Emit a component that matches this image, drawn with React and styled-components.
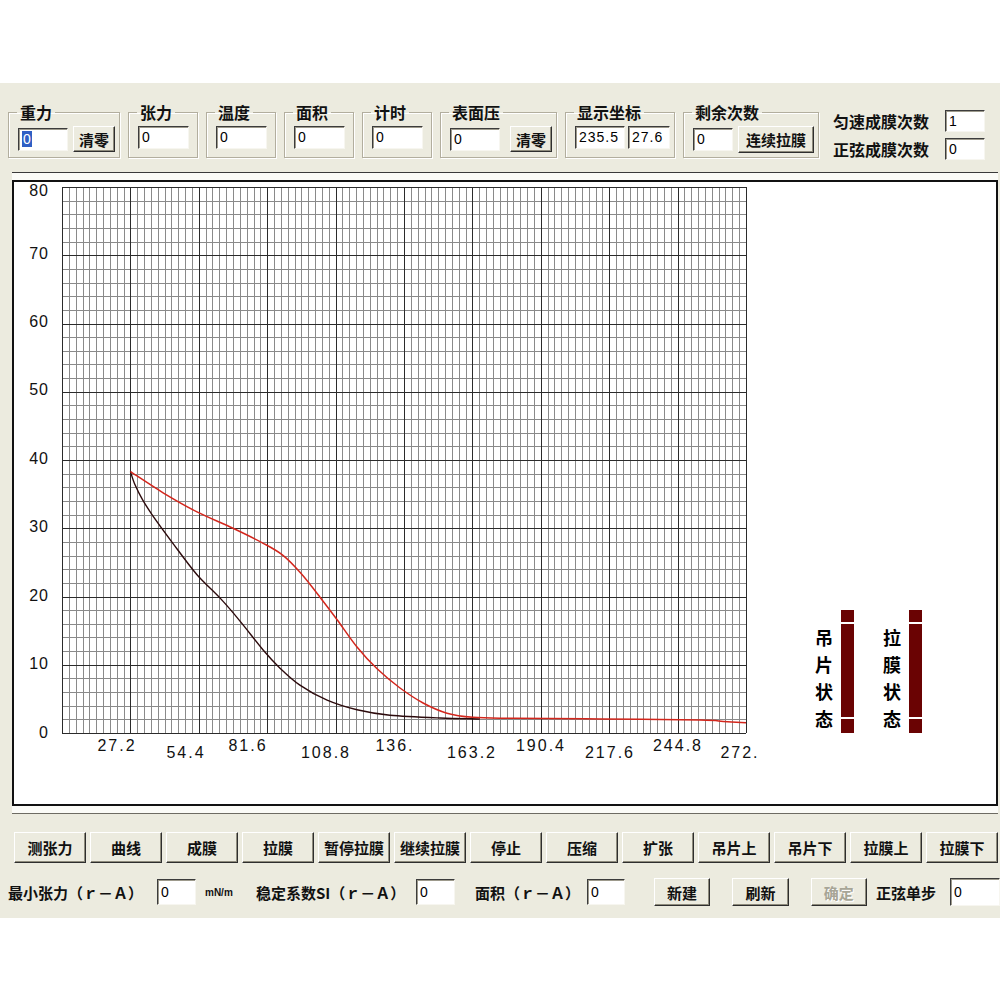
import React from "react";
import styled, { createGlobalStyle } from "styled-components";

const GlobalStyle = createGlobalStyle`
  body {
    margin: 0;
    background: #fff;
    font-family: "Noto Sans CJK SC", "Liberation Sans", sans-serif;
  }
`;

const Page = styled.div`
  width: 1000px;
  padding-top: 83px;
`;

const Window = styled.div`
  box-sizing: border-box;
  height: 835px;
  overflow: hidden;
  padding-top: 20px;
  background: #ecebdf;
  color: #111;
  font-family: "Noto Sans CJK SC", "Liberation Sans", sans-serif;
`;

/* ---------- top toolbar ---------- */
const Toolbar = styled.div`
  display: flex;
  align-items: flex-start;
  gap: 8px;
  height: 56px;
  padding-left: 8px;
`;

const Group = styled.fieldset`
  box-sizing: border-box;
  width: ${(p) => p.$w}px;
  height: 55px;
  margin: 0;
  padding: 5px 4px 4px 9px;
  border: 1px solid #b2ae9e;
  box-shadow: inset 1px 1px 0 #fff, 1px 1px 0 #fff;
`;

const Legend = styled.legend`
  margin-left: -1px;
  padding: 0 3px;
  font-size: 16px;
  line-height: 18px;
  font-weight: 700;
`;

const GroupRow = styled.div`
  display: flex;
  align-items: center;
  gap: ${(p) => p.$gap || 5}px;
`;

const Field = styled.div`
  box-sizing: border-box;
  width: ${(p) => p.$w}px;
  height: ${(p) => p.$h || 23}px;
  padding-left: 3px;
  background: #fff;
  border: 1px solid;
  border-color: #3c3c3c #f7f6f0 #f7f6f0 #3c3c3c;
  box-shadow: inset 1px 1px 0 #9d9a8c;
  font-family: "Liberation Sans", sans-serif;
  font-size: 14px;
  line-height: ${(p) => (p.$h || 23) - 2}px;
  letter-spacing: ${(p) => (p.$wide ? 1 : 0)}px;
  color: #000;
  white-space: nowrap;
  overflow: hidden;
`;

const Selected = styled.span`
  background: #2f5fc4;
  color: #fff;
  padding: 0 1px;
`;

const Btn = styled.button`
  box-sizing: border-box;
  width: ${(p) => p.$w}px;
  height: ${(p) => p.$h || 30}px;
  padding: 0;
  margin-left: ${(p) => p.$ml || 0}px;
  background: #ecebdf;
  border: 1px solid;
  border-color: #fff #2e2e2e #2e2e2e #fff;
  box-shadow: inset -1px -1px 0 #8e8b7c;
  font-family: "Noto Sans CJK SC", sans-serif;
  font-size: 15px;
  font-weight: 700;
  color: ${(p) => (p.disabled ? "#a7a596" : "#111")};
  text-shadow: ${(p) => (p.disabled ? "1px 1px 0 #fff" : "none")};
  white-space: nowrap;
`;

const Stats = styled.div`
  display: grid;
  grid-template-columns: 112px 40px;
  grid-auto-rows: 22px;
  row-gap: 6px;
  align-items: center;
  margin: 7px 0 0 6px;
`;

const StatLabel = styled.span`
  font-size: 16px;
  font-weight: 700;
  line-height: 22px;
  white-space: nowrap;
`;

/* ---------- chart ---------- */
const ChartFrame = styled.div`
  margin: 13px 2px 0 12px;
  padding: 7px 0;
  background: #fbfbf7;
  border-top: 1px solid #3a3a3a;
  border-bottom: 1px solid #6d6b62;
`;

const Chart = styled.div`
  box-sizing: border-box;
  height: 626px;
  display: flex;
  align-items: flex-start;
  background: #fff;
  border: 2px solid #111;
`;

const Status = styled.div`
  display: flex;
  gap: 29px;
  margin: 428px 0 0 41px;
`;

const StatusItem = styled.div`
  display: flex;
  gap: 8px;
`;

const VText = styled.div`
  width: 18px;
  padding-top: 14px;
  font-size: 18px;
  line-height: 27px;
  font-weight: 700;
  color: #000;
`;

const Bar = styled.div`
  width: 13px;
  height: 123px;
  display: flex;
  flex-direction: column;
  gap: 2px;
  background: #fff;
`;

const Seg = styled.div`
  flex: ${(p) => (p.$h ? `0 0 ${p.$h}px` : "1")};
  background: #6a0303;
`;

/* ---------- bottom ---------- */
const ButtonRow = styled.div`
  display: flex;
  gap: 4px;
  padding-left: 14px;
  margin-top: 18px;
`;

const InfoRow = styled.div`
  display: flex;
  align-items: center;
  padding-left: 8px;
  margin-top: 15px;
`;

const InfoLabel = styled.span`
  flex: none;
  width: ${(p) => p.$w}px;
  margin-left: ${(p) => p.$ml || 0}px;
  font-size: 15px;
  font-weight: 700;
  white-space: nowrap;
`;

const Unit = styled.span`
  width: 33px;
  margin-left: 9px;
  font-family: "Liberation Sans", sans-serif;
  font-size: 10px;
  font-weight: 700;
`;

const Spaced = styled.div`
  flex: none;
  margin-left: ${(p) => p.$ml || 0}px;
`;

/* ---------- plot drawing ---------- */
const X0 = 48;
const Y0 = 5;
const W = 684;
const H = 546;
const sx = (v) => X0 + (v * W) / 272;
const sy = (v) => Y0 + H - (v * H) / 80;

const redCurve = [
  [27.2, 38.3], [40.2, 35.2], [53.7, 32.4], [68, 30.0], [80, 27.8],
  [88, 26.0], [95, 23.4], [102.6, 19.9], [109.4, 16.6], [117.3, 12.6],
  [125.3, 9.4], [134.4, 6.6], [143.6, 4.4], [153.1, 2.9], [163.4, 2.3],
  [180, 2.15], [213.9, 2.05], [253.7, 1.9], [263, 1.7], [272, 1.5],
];

const darkCurve = [
  [27.2, 38.3], [29, 36.4], [32, 34.2], [36, 31.9], [44.1, 27.8],
  [53.7, 23.2], [62.8, 19.8], [70.8, 16.4], [79.9, 12.2], [86.7, 9.5],
  [94.6, 7.0], [105.4, 4.8], [117.3, 3.4], [130.4, 2.6], [150.3, 2.2],
  [166.2, 2.05],
];

const xLabels = [
  ["27.2", 103, 565], ["54.4", 172, 572], ["81.6", 234, 565], ["108.8", 312, 572],
  ["136.", 381, 565], ["163.2", 458, 572], ["190.4", 527, 565], ["217.6", 596, 572],
  ["244.8", 664, 565], ["272.", 726, 572],
];

const yLabels = [
  ["80", 10], ["70", 73], ["60", 141], ["50", 209], ["40", 278],
  ["30", 346], ["20", 415], ["10", 483], ["0", 552],
];

// Catmull-Rom spline through the sampled points
const toPath = (data) => {
  const p = data.map(([x, y]) => [sx(x), sy(y)]);
  let d = `M${p[0][0].toFixed(1)},${p[0][1].toFixed(1)}`;
  for (let i = 0; i < p.length - 1; i++) {
    const p0 = p[i - 1] || p[i];
    const p1 = p[i];
    const p2 = p[i + 1];
    const p3 = p[i + 2] || p2;
    const c1x = p1[0] + (p2[0] - p0[0]) / 6;
    const c1y = p1[1] + (p2[1] - p0[1]) / 6;
    const c2x = p2[0] - (p3[0] - p1[0]) / 6;
    const c2y = p2[1] - (p3[1] - p1[1]) / 6;
    d += ` C${c1x.toFixed(1)},${c1y.toFixed(1)} ${c2x.toFixed(1)},${c2y.toFixed(1)} ${p2[0].toFixed(1)},${p2[1].toFixed(1)}`;
  }
  return d;
};

function Plot() {
  const minorV = [];
  const majorV = [];
  for (let i = 0; i <= 100; i++) {
    const x = Math.round(X0 + (i * W) / 100) + 0.5;
    (i % 10 === 0 ? majorV : minorV).push(x);
  }
  const minorH = [];
  const majorH = [];
  for (let j = 0; j <= 40; j++) {
    const y = Math.round(Y0 + (j * H) / 40) + 0.5;
    (j % 5 === 0 ? majorH : minorH).push(y);
  }

  return (
    <svg width="760" height="600" style={{ flex: "none" }}>
      <g shapeRendering="crispEdges" strokeWidth="1">
        {minorV.map((x) => (
          <line key={"mv" + x} x1={x} x2={x} y1={Y0} y2={Y0 + H} stroke="#8a8a8a" />
        ))}
        {minorH.map((y) => (
          <line key={"mh" + y} x1={X0} x2={X0 + W} y1={y} y2={y} stroke="#8a8a8a" />
        ))}
        {majorV.map((x) => (
          <line key={"Mv" + x} x1={x} x2={x} y1={Y0} y2={Y0 + H} stroke="#2b2b2b" />
        ))}
        {majorH.map((y) => (
          <line key={"Mh" + y} x1={X0} x2={X0 + W} y1={y} y2={y} stroke="#2b2b2b" />
        ))}
      </g>
      <path d={toPath(darkCurve)} fill="none" stroke="#2c0a0c" strokeWidth="1.4" />
      <path d={toPath(redCurve)} fill="none" stroke="#d3261c" strokeWidth="1.5" />
      <g fontFamily="'Liberation Sans', sans-serif" fontSize="16" fill="#111">
        {yLabels.map(([t, y]) => (
          <text key={t} x="35" y={y} textAnchor="end" dominantBaseline="middle" letterSpacing="1">
            {t}
          </text>
        ))}
        {xLabels.map(([t, x, y]) => (
          <text key={t} x={x} y={y} textAnchor="middle" dominantBaseline="middle" letterSpacing="2">
            {t}
          </text>
        ))}
      </g>
    </svg>
  );
}

function StatusBar({ label }) {
  return (
    <StatusItem>
      <VText>{label}</VText>
      <Bar>
        <Seg $h={12} />
        <Seg />
        <Seg $h={14} />
      </Bar>
    </StatusItem>
  );
}

const bottomButtons = [
  "测张力", "曲线", "成膜", "拉膜", "暂停拉膜", "继续拉膜", "停止",
  "压缩", "扩张", "吊片上", "吊片下", "拉膜上", "拉膜下",
];

export default function App() {
  return (
    <Page>
      <GlobalStyle />
      <Window>
        <Toolbar>
          <Group $w={112}>
            <Legend>重力</Legend>
            <GroupRow>
              <Field $w={50}>
                <Selected>0</Selected>
              </Field>
              <Btn $w={42} $h={26}>清零</Btn>
            </GroupRow>
          </Group>
          <Group $w={70}>
            <Legend>张力</Legend>
            <Field $w={51}>0</Field>
          </Group>
          <Group $w={70}>
            <Legend>温度</Legend>
            <Field $w={51}>0</Field>
          </Group>
          <Group $w={70}>
            <Legend>面积</Legend>
            <Field $w={51}>0</Field>
          </Group>
          <Group $w={70}>
            <Legend>计时</Legend>
            <Field $w={51}>0</Field>
          </Group>
          <Group $w={116}>
            <Legend>表面压</Legend>
            <GroupRow $gap={10}>
              <Field $w={50}>0</Field>
              <Btn $w={42} $h={26}>清零</Btn>
            </GroupRow>
          </Group>
          <Group $w={101}>
            <Legend>显示坐标</Legend>
            <GroupRow $gap={3}>
              <Field $w={50} $wide>235.5</Field>
              <Field $w={42} $wide>27.6</Field>
            </GroupRow>
          </Group>
          <Group $w={130}>
            <Legend>剩余次数</Legend>
            <GroupRow $gap={5}>
              <Field $w={40}>0</Field>
              <Btn $w={76} $h={27}>连续拉膜</Btn>
            </GroupRow>
          </Group>
          <Stats>
            <StatLabel>匀速成膜次数</StatLabel>
            <Field $w={40} $h={22}>1</Field>
            <StatLabel>正弦成膜次数</StatLabel>
            <Field $w={40} $h={22}>0</Field>
          </Stats>
        </Toolbar>

        <ChartFrame>
          <Chart>
            <Plot />
            <Status>
              <StatusBar label="吊片状态" />
              <StatusBar label="拉膜状态" />
            </Status>
          </Chart>
        </ChartFrame>

        <ButtonRow>
          {bottomButtons.map((b) => (
            <Btn key={b} $w={72} $h={31}>
              {b}
            </Btn>
          ))}
        </ButtonRow>

        <InfoRow>
          <InfoLabel $w={140}>最小张力（ｒ－Ａ）</InfoLabel>
          <Spaced $ml={9}>
            <Field $w={39} $h={26}>0</Field>
          </Spaced>
          <Unit>mN/m</Unit>
          <InfoLabel $w={152} $ml={20}>稳定系数SI（ｒ－Ａ）</InfoLabel>
          <Spaced $ml={8}>
            <Field $w={39} $h={26}>0</Field>
          </Spaced>
          <InfoLabel $w={108} $ml={20}>面积（ｒ－Ａ）</InfoLabel>
          <Spaced $ml={4}>
            <Field $w={38} $h={26}>0</Field>
          </Spaced>
          <Btn $w={60} $h={28} $ml={29}>新建</Btn>
          <Btn $w={60} $h={28} $ml={22}>刷新</Btn>
          <Btn $w={60} $h={28} $ml={22} disabled>确定</Btn>
          <InfoLabel $w={66} $ml={9}>正弦单步</InfoLabel>
          <Spaced $ml={8}>
            <Field $w={50} $h={28}>0</Field>
          </Spaced>
        </InfoRow>
      </Window>
    </Page>
  );
}
